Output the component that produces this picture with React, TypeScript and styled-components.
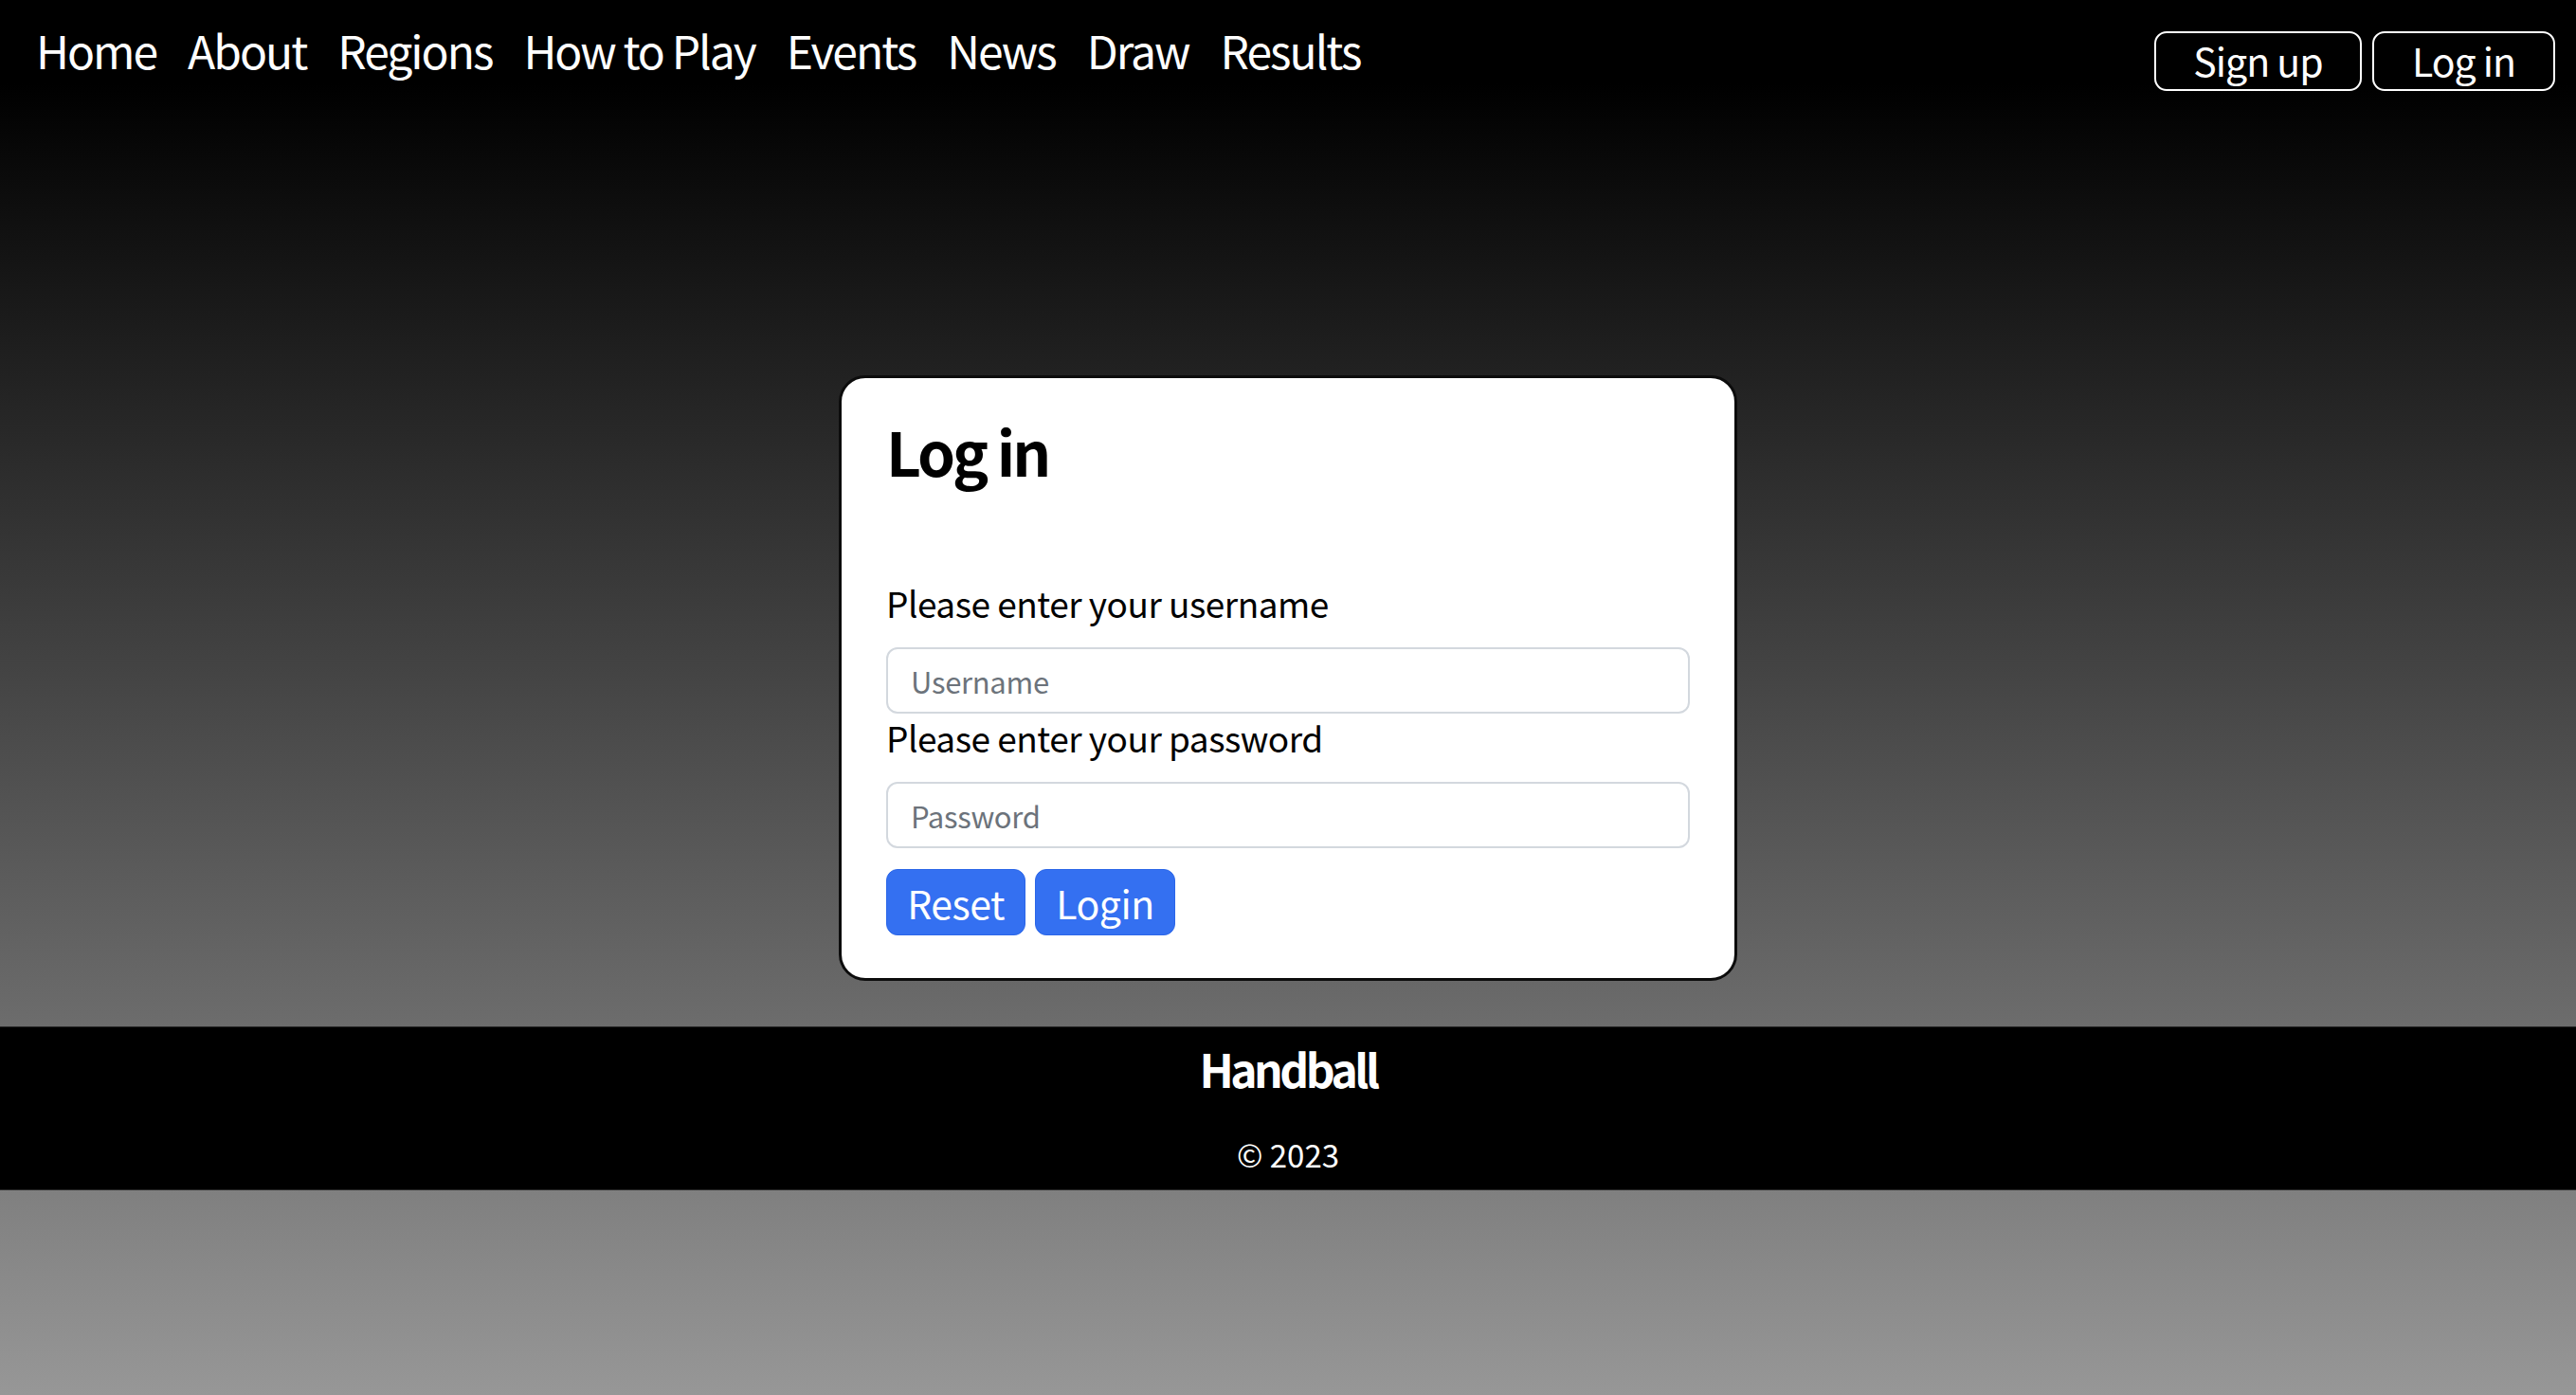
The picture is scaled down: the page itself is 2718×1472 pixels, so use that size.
import React from 'react';
import styled, { createGlobalStyle } from 'styled-components';

const GlobalStyle = createGlobalStyle`
  html, body {
    margin: 0;
    padding: 0;
    min-height: 100%;
  }

  body {
    min-height: 100vh;
    font-family: 'Noto Sans CJK KR', 'Noto Sans', sans-serif;
    background: linear-gradient(to bottom, #000 88px, #979797 100%) no-repeat;
    background-color: #979797;
  }
`;

const Page = styled.div`
  display: flex;
  flex-direction: column;
`;

const Header = styled.header`
  display: flex;
  justify-content: space-between;
  align-items: flex-start;
  padding: 23px 22px 0 38px;
`;

const Nav = styled.nav`
  display: flex;
  gap: 33px;
  margin-top: 3px;
`;

const NavLink = styled.a`
  color: #fff;
  font-size: 48px;
  line-height: 53px;
  letter-spacing: -2px;
  text-decoration: none;
  white-space: nowrap;
`;

const AuthButtons = styled.div`
  display: flex;
  gap: 11px;
  margin-top: 10px;
`;

const OutlineButton = styled.button<{ $width: number }>`
  display: flex;
  align-items: center;
  justify-content: center;
  width: ${({ $width }) => `${$width}px`};
  height: 63px;
  padding: 0 0 2px;
  background: transparent;
  border: 2px solid #fff;
  border-radius: 13px;
  color: #fff;
  font-family: inherit;
  font-size: 41px;
  letter-spacing: -1px;
  line-height: 1;
`;

const Main = styled.main`
  display: flex;
  justify-content: center;
  padding-top: 300px;
`;

const Card = styled.section`
  box-sizing: border-box;
  width: 948px;
  padding: 43px 47px 45px;
  background: #fff;
  border: 3px solid #0c0c0c;
  border-radius: 28px;
`;

const Title = styled.h1`
  margin: 0 0 108px;
  font-size: 64px;
  font-weight: 700;
  line-height: 67px;
  letter-spacing: -3px;
  color: #000;
`;

const Field = styled.div`
  display: flex;
  flex-direction: column;
`;

const Label = styled.label`
  font-size: 37px;
  line-height: 38px;
  letter-spacing: -0.5px;
  color: #000;
  margin-bottom: 28px;
`;

const Input = styled.input`
  box-sizing: border-box;
  width: 100%;
  height: 70px;
  margin-bottom: 6px;
  padding: 0 24px;
  border: 2px solid #d3d8de;
  border-radius: 12px;
  font-family: inherit;
  font-size: 31px;
  letter-spacing: -0.3px;
  color: #212529;
  outline: none;

  &::placeholder {
    color: #6c737b;
  }
`;

const ButtonRow = styled.div`
  display: flex;
  gap: 10px;
  margin-top: 16px;
`;

const PrimaryButton = styled.button<{ $width: number }>`
  display: flex;
  align-items: center;
  justify-content: center;
  width: ${({ $width }) => `${$width}px`};
  height: 70px;
  padding: 0;
  background: #3470f1;
  border: 1px solid #2b66e8;
  border-radius: 12px;
  color: #fff;
  font-family: inherit;
  font-size: 41px;
  letter-spacing: -0.5px;
  line-height: 1;
`;

const Footer = styled.footer`
  display: flex;
  flex-direction: column;
  align-items: center;
  margin-top: 48px;
  height: 173px;
  box-sizing: border-box;
  padding-top: 18px;
  background: #000;
  border-top: 1px solid #2a2a2a;
  border-bottom: 1px solid #2a2a2a;
  color: #fff;
`;

const Brand = styled.div`
  font-size: 48px;
  font-weight: 700;
  line-height: 51px;
  letter-spacing: -3.5px;
`;

const Copyright = styled.div`
  margin-top: 48px;
  font-size: 33px;
  line-height: 34px;
`;

const navItems = ['Home', 'About', 'Regions', 'How to Play', 'Events', 'News', 'Draw', 'Results'];

export default function App() {
  return (
    <Page>
      <GlobalStyle />
      <Header>
        <Nav>
          {navItems.map(item => (
            <NavLink key={item} href="#">
              {item}
            </NavLink>
          ))}
        </Nav>
        <AuthButtons>
          <OutlineButton $width={219}>Sign up</OutlineButton>
          <OutlineButton $width={193}>Log in</OutlineButton>
        </AuthButtons>
      </Header>
      <Main>
        <Card>
          <Title>Log in</Title>
          <Field>
            <Label htmlFor="username">Please enter your username</Label>
            <Input id="username" placeholder="Username" />
          </Field>
          <Field>
            <Label htmlFor="password">Please enter your password</Label>
            <Input id="password" type="password" placeholder="Password" />
          </Field>
          <ButtonRow>
            <PrimaryButton $width={147}>Reset</PrimaryButton>
            <PrimaryButton $width={148}>Login</PrimaryButton>
          </ButtonRow>
        </Card>
      </Main>
      <Footer>
        <Brand>Handball</Brand>
        <Copyright>© 2023</Copyright>
      </Footer>
    </Page>
  );
}
